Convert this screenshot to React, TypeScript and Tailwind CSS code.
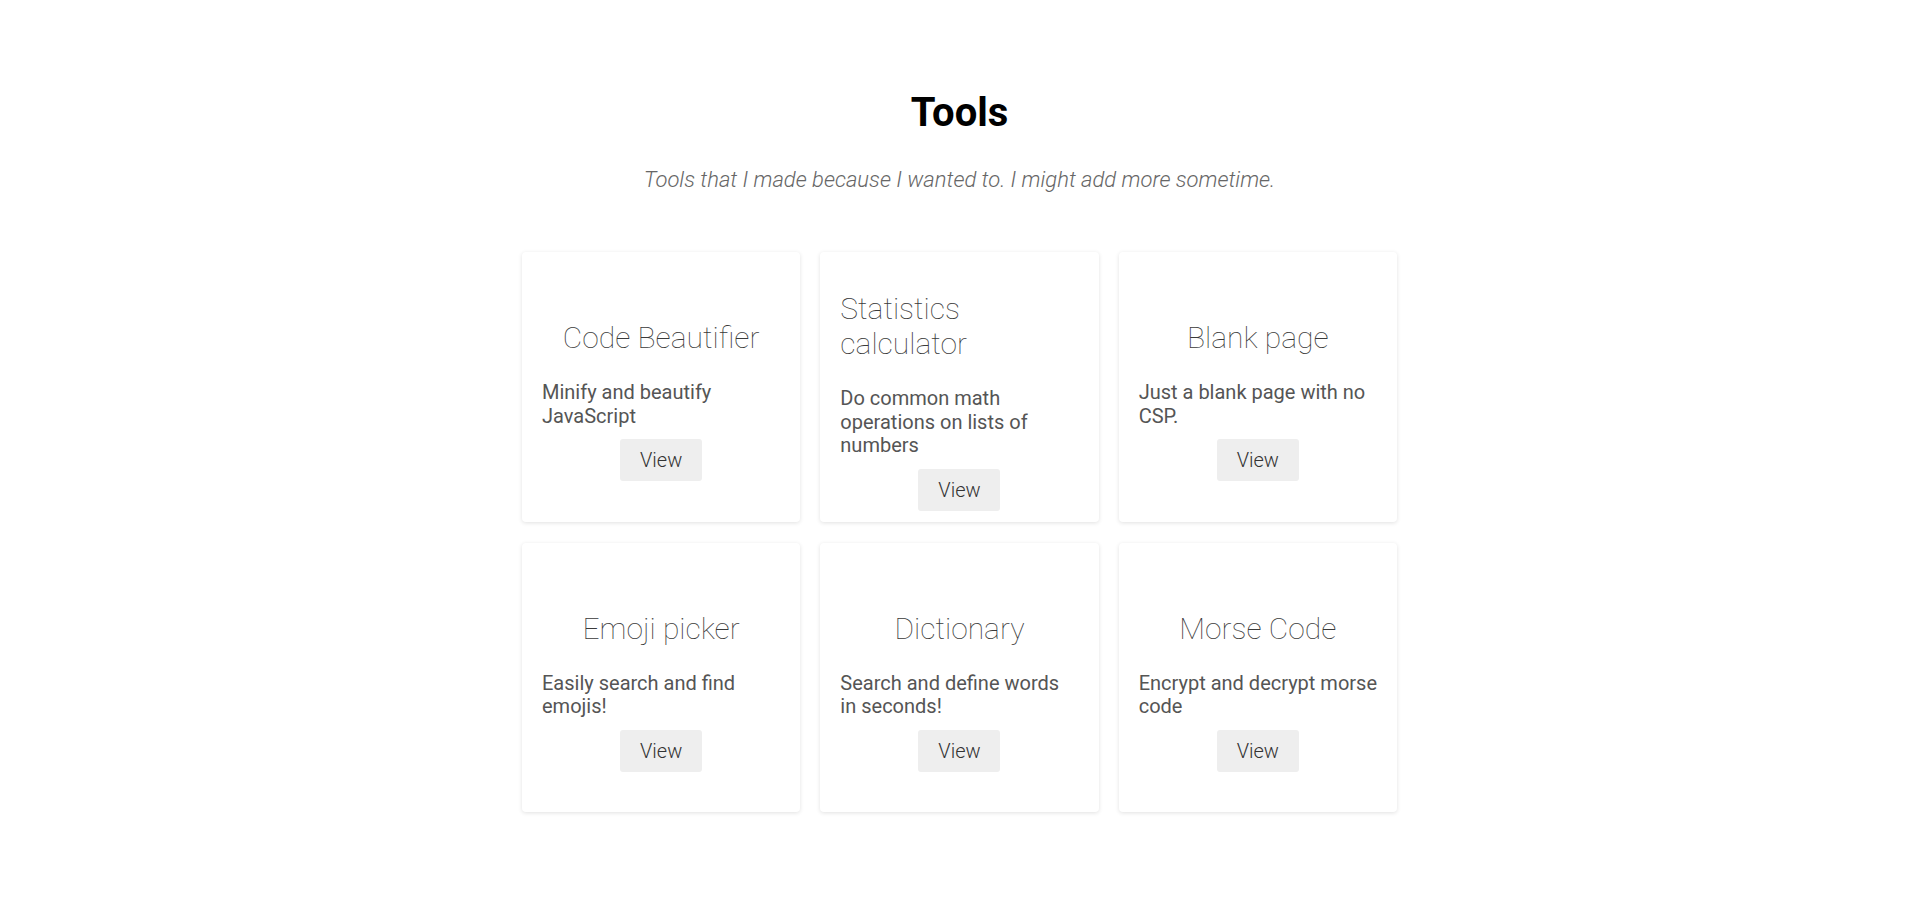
const tools = [
  { name: "Code Beautifier", desc: "Minify and beautify JavaScript" },
  { name: "Statistics calculator", desc: "Do common math operations on lists of numbers" },
  { name: "Blank page", desc: "Just a blank page with no CSP." },
  { name: "Emoji picker", desc: "Easily search and find emojis!" },
  { name: "Dictionary", desc: "Search and define words in seconds!" },
  { name: "Morse Code", desc: "Encrypt and decrypt morse code" },
];

function ToolCard({ name, desc }: { name: string; desc: string }) {
  return (
    <div className="flex flex-col justify-center rounded-[4px] bg-white px-5 pt-[39px] pb-[11px] shadow-[0_1px_4px_rgba(0,0,0,0.12)]">
      {/* title centers when it fits, lines sit left once it wraps */}
      <div className="text-center">
        <h2 className="inline-block text-left text-[30px] leading-[35px] font-thin text-[#3a3a3a]">{name}</h2>
      </div>
      <p className="mt-[26px] text-[20px] leading-[23.5px] text-[#555]">{desc}</p>
      <div className="mt-[11px] flex justify-center">
        <button
          type="button"
          className="h-[42px] w-[82px] rounded-[3px] bg-[#eeeeee] text-[20px] font-light text-[#333]"
        >
          View
        </button>
      </div>
    </div>
  );
}

export default function App() {
  return (
    <div className="min-h-screen bg-white font-['Roboto',sans-serif] pt-[89px] pb-16">
      <h1 className="text-center text-[40px] leading-[47px] font-bold text-black">Tools</h1>
      <p className="mt-[31px] text-center text-[22px] leading-[26px] font-light italic text-[#666]">
        Tools that I made because I wanted to. I might add more sometime.
      </p>
      <div className="mx-auto mt-[59px] grid w-[875px] auto-rows-fr grid-cols-3 gap-x-5 gap-y-[21px]">
        {tools.map((t) => (
          <ToolCard key={t.name} name={t.name} desc={t.desc} />
        ))}
      </div>
    </div>
  );
}
